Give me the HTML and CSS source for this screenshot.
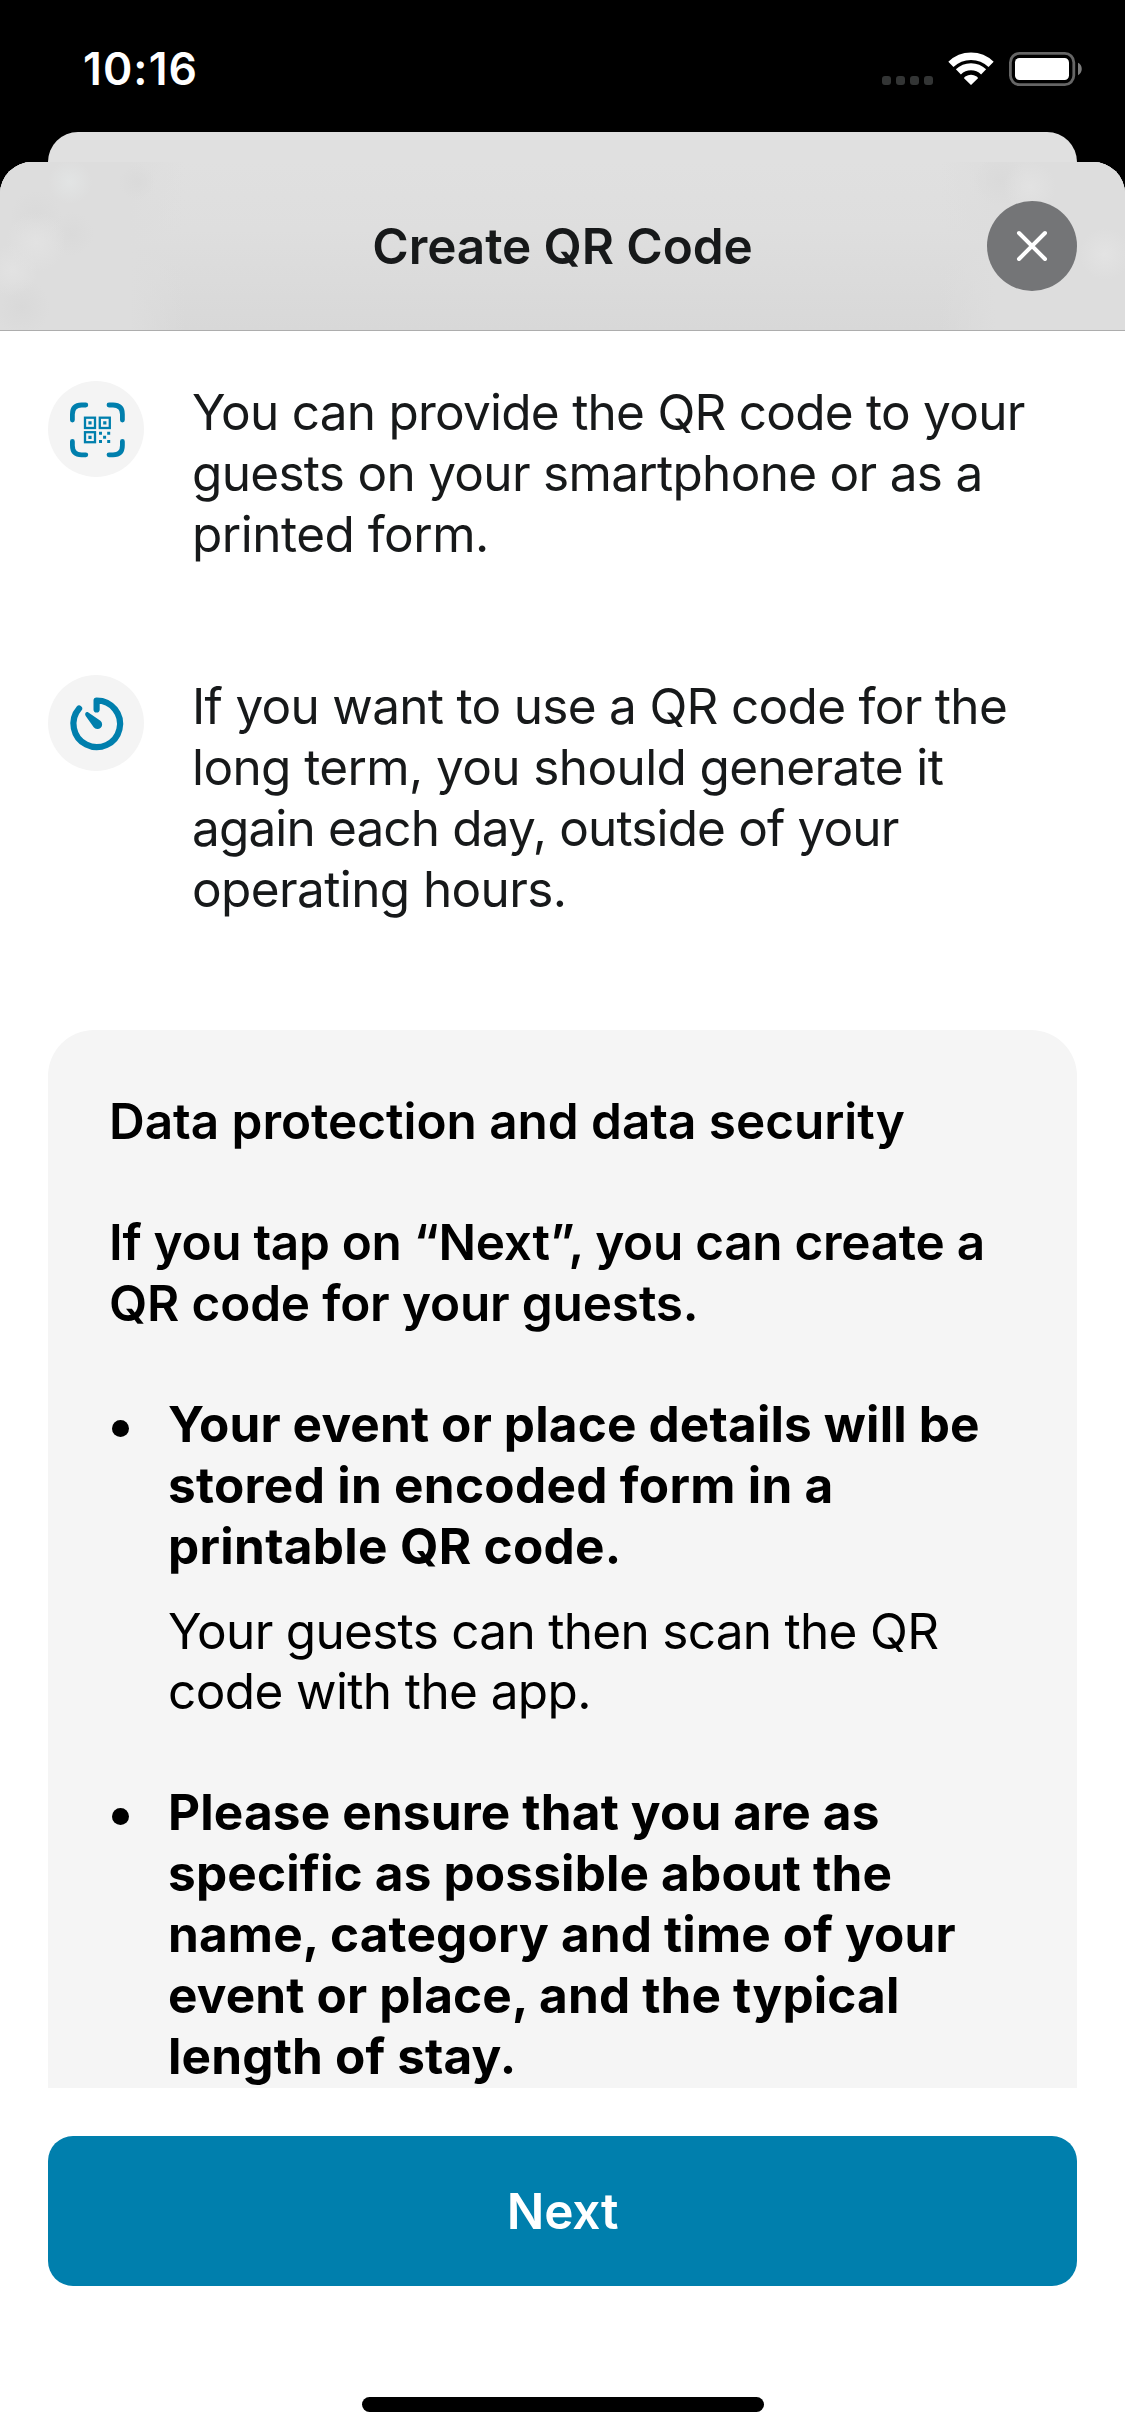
FILE: index.html
```
<!DOCTYPE html>
<html lang="en">
<head>
  <meta charset="utf-8">
  <title>Create QR Code</title>
  <link rel="stylesheet" href="styles.css">
</head>
<body>
  <div class="screen">
    <header class="status">
      <span class="status-time">10:16</span>
      <svg class="status-icons" width="204" height="36" viewBox="880 51 204 36" aria-hidden="true">
        <g fill="#333535">
          <rect x="882" y="76" width="9" height="9" rx="3"/>
          <rect x="896" y="76" width="9" height="9" rx="3"/>
          <rect x="910" y="76" width="9" height="9" rx="3"/>
          <rect x="924" y="76" width="9" height="9" rx="3"/>
        </g>
        <g fill="none" stroke="#fff">
          <path stroke-width="7.4" d="M950.9 64.4A28.8 28.8 0 0 1 991.1 64.4"/>
          <path stroke-width="7.2" d="M958.4 71.9A18 18 0 0 1 983.6 71.9"/>
        </g>
        <path fill="#fff" d="M971 85L964 78.2Q964.2 77.2 965.3 76.6A11 11 0 0 1 976.7 76.6Q977.8 77.2 978 78.2Z"/>
        <rect x="1010.4" y="53.4" width="63.4" height="31.2" rx="9" fill="none" stroke="#666" stroke-width="2.8"/>
        <rect x="1015" y="58" width="54" height="22" rx="4.5" fill="#fff"/>
        <path fill="#7d7d7d" d="M1078 62.8C1083 65 1083 73 1078 75.2Z"/>
      </svg>
    </header>

    <div class="back-card"></div>

    <main class="sheet">
      <div class="sheet-header">
        <h1 class="title">Create QR Code</h1>
        <button class="close" aria-label="Close">
          <svg width="34" height="34" viewBox="0 0 34 34"><path d="M4 4L30 30M30 4L4 30" fill="none" stroke="#fff" stroke-width="4" stroke-linecap="round"/></svg>
        </button>
      </div>

      <div class="content">
        <section class="info">
          <span class="badge">
            <svg width="96" height="96" viewBox="0 0 96 96">
              <g fill="none" stroke="#007fad" stroke-width="4.8" stroke-linecap="round">
                <path d="M24.4 39V33.2Q24.4 24 33.6 24H37.8"/>
                <path d="M61 24H65Q74.4 24 74.4 33.2V39"/>
                <path d="M74.4 60.5V64.5Q74.4 73.8 65 73.8H61"/>
                <path d="M37.8 73.8H33.6Q24.4 73.8 24.4 64.5V60.5"/>
              </g>
              <g fill="none" stroke="#007fad" stroke-width="2.3">
                <rect x="37" y="36.7" width="10" height="10.3"/>
                <rect x="51.8" y="36.7" width="10" height="10.3"/>
                <rect x="37" y="51.2" width="10" height="10"/>
              </g>
              <g fill="#007fad">
                <path d="M40.4 40.3h3.2v3.2h-3.2zM55.2 40.3h3.2v3.2h-3.2zM40.4 54.7h3.2v3.2h-3.2z"/>
                <path d="M51 50.7h3v3h-3zM59.2 50.7h3v3h-3zM55.1 54.8h3v3h-3zM51 58.9h3v3h-3zM59.2 58.9h3v3h-3z"/>
              </g>
            </svg>
          </span>
          <p class="text info-text">
            <span class="line track-75">You can provide the QR code to your</span>
            <span class="line track-70">guests on your smartphone or as a</span>
            <span class="line track-50">printed form.</span>
          </p>
        </section>

        <section class="info">
          <span class="badge">
            <svg width="96" height="96" viewBox="0 0 96 96">
              <path d="M31.1 33.6A23.3 23.3 0 1 0 48.6 25.5V34.5" fill="none" stroke="#007fad" stroke-width="6.2" stroke-linecap="round" stroke-linejoin="round"/>
              <path fill="#007fad" d="M37.6 37.7C38.3 36.9 39.4 36.9 40.4 37.5L52.4 45.7A4.7 4.7 0 1 1 45.7 52.2L37.7 40.9C37 39.8 37 38.4 37.6 37.7Z"/>
            </svg>
          </span>
          <p class="text info-text">
            <span class="line track-70">If you want to use a QR code for the</span>
            <span class="line track-60">long term, you should generate it</span>
            <span class="line track-85">again each day, outside of your</span>
            <span class="line track-60">operating hours.</span>
          </p>
        </section>

        <section class="card">
          <h2 class="text heading">Data protection and data security</h2>
          <p class="text heading">
            <span class="line track-30">If you tap on “Next”, you can create a</span>
            <span class="line track-20">QR code for your guests.</span>
          </p>
          <ul class="points">
            <li class="point">
              <span class="dot"></span>
              <div class="point-body">
                <p class="text strong">
                  <span class="line">Your event or place details will be</span>
                  <span class="line wide">stored in encoded form in a</span>
                  <span class="line wide">printable QR code.</span>
                </p>
                <p class="text">
                  <span class="line track-70">Your guests can then scan the QR</span>
                  <span class="line track-60">code with the app.</span>
                </p>
              </div>
            </li>
            <li class="point">
              <span class="dot"></span>
              <div class="point-body">
                <p class="text strong">
                  <span class="line">Please ensure that you are as</span>
                  <span class="line">specific as possible about the</span>
                  <span class="line">name, category and time of your</span>
                  <span class="line">event or place, and the typical</span>
                  <span class="line">length of stay.</span>
                </p>
              </div>
            </li>
          </ul>
        </section>
      </div>

      <footer class="footer">
        <button class="next">Next</button>
        <div class="home-indicator"></div>
      </footer>
    </main>
  </div>
</body>
</html>
```
FILE: styles.css
```
* {
  box-sizing: border-box;
  margin: 0;
  padding: 0;
}

body {
  background: #000;
  font-family: Inter, "Liberation Sans", sans-serif;
  font-size: 49.5px;
}

button {
  border: 0;
  font: inherit;
}

.screen {
  display: flex;
  flex-direction: column;
  width: 1125px;
  height: 2436px;
  overflow: hidden;
}

/* Status bar */
.status {
  display: flex;
  align-items: center;
  justify-content: space-between;
  flex: none;
  height: 132px;
  padding: 6px 41px 0 83px;
}

.status-time {
  color: #fff;
  font-size: 44.5px;
  font-weight: 600;
  letter-spacing: 1.1px;
}

/* Stacked sheets */
.back-card {
  flex: none;
  height: 30px;
  margin: 0 48px;
  border-radius: 30px 30px 0 0;
  background: #e0e0e0;
}

.sheet {
  display: flex;
  flex-direction: column;
  flex: 1;
  min-height: 0;
  border-radius: 32px 32px 0 0;
  background: #fff;
  overflow: hidden;
}

.sheet-header {
  display: grid;
  grid-template-columns: 90px 1fr 90px;
  align-items: center;
  flex: none;
  height: 169px;
  padding: 0 48px;
  border-bottom: 1px solid #adadad;
  background:
    radial-gradient(circle at 70px 20px, #e2e4e4 0, transparent 22px),
    radial-gradient(circle at 36px 80px, #e2e2e2 0, transparent 30px),
    radial-gradient(circle at 12px 108px, #e2e2e2 0, transparent 26px),
    radial-gradient(circle at 36px 54px, #dadada 0, transparent 26px),
    radial-gradient(circle at 137px 20px, #dadada 0, transparent 18px),
    radial-gradient(circle at 72px 72px, #dadada 0, transparent 22px),
    radial-gradient(circle at 22px 145px, #d9d9d9 0, transparent 28px),
    radial-gradient(circle at 1105px 92px, #e3e3e3 0, transparent 26px),
    radial-gradient(circle at 1030px 25px, #e2e2e2 0, transparent 26px),
    radial-gradient(circle at 1000px 18px, #dadada 0, transparent 26px),
    linear-gradient(90deg, #dddddd 0, #dddddd 130px, transparent 185px, transparent 940px, #dddddd 995px),
    linear-gradient(#e0e0e0, #dedede 40%, #d8d8d8);
}

.title {
  grid-column: 2;
  color: #17191a;
  font-size: 49.5px;
  font-weight: 600;
  letter-spacing: -0.1px;
  line-height: 60px;
  text-align: center;
}

.close {
  display: flex;
  align-items: center;
  justify-content: center;
  width: 90px;
  height: 90px;
  border-radius: 50%;
  background: #747577;
}

/* Scrolling content, cut off above the footer */
.content {
  flex: none;
  height: 1757px;
  padding: 50px 48px 0;
  overflow: hidden;
}

.text {
  font-size: 49.5px;
  font-weight: 400;
  line-height: 60.87px;
}

.line {
  display: block;
  white-space: nowrap;
}

.track-20 { letter-spacing: -0.17px; }
.track-30 { letter-spacing: -0.3px; }
.track-50 { letter-spacing: -0.5px; }
.track-60 { letter-spacing: -0.61px; }
.track-70 { letter-spacing: -0.7px; }
.track-75 { letter-spacing: -0.75px; }
.track-85 { letter-spacing: -0.86px; }

.info {
  display: flex;
  align-items: flex-start;
  gap: 48px;
  margin-bottom: 110.4px;
}

.info-text {
  margin-top: 1px;
  color: #17191a;
}

.badge {
  flex: none;
  width: 96px;
  height: 96px;
  border-radius: 50%;
  background: #f4f4f4;
}

.badge svg {
  display: block;
}

.card {
  display: flex;
  flex-direction: column;
  gap: 60px;
  padding: 61px 60px 60px 61px;
  border-radius: 46px;
  height: 1400px;
  background: #f5f5f5;
  color: #000;
}

.heading {
  font-weight: 600;
  letter-spacing: -0.04px;
}

.points {
  display: flex;
  flex-direction: column;
  gap: 60px;
  list-style: none;
}

.point {
  display: flex;
  align-items: flex-start;
  gap: 39px;
}

.dot {
  flex: none;
  width: 17px;
  height: 17px;
  margin: 26px 0 0 3px;
  border-radius: 50%;
  background: #000;
}

.point-body {
  display: flex;
  flex-direction: column;
  gap: 24px;
}

.strong {
  font-weight: 700;
  letter-spacing: 0.16px;
  line-height: 61px;
}

.wide { letter-spacing: 0.3px; }

/* Footer */
.footer {
  display: flex;
  flex-direction: column;
  align-items: center;
  justify-content: space-between;
  flex: 1;
  padding: 48px 48px 24px;
}

.next {
  width: 100%;
  height: 150px;
  border-radius: 25px;
  background: #007fad;
  color: #fff;
  font-weight: 600;
  letter-spacing: -0.2px;
}

.home-indicator {
  width: 402px;
  height: 15px;
  border-radius: 8px;
  background: #000;
}
```
